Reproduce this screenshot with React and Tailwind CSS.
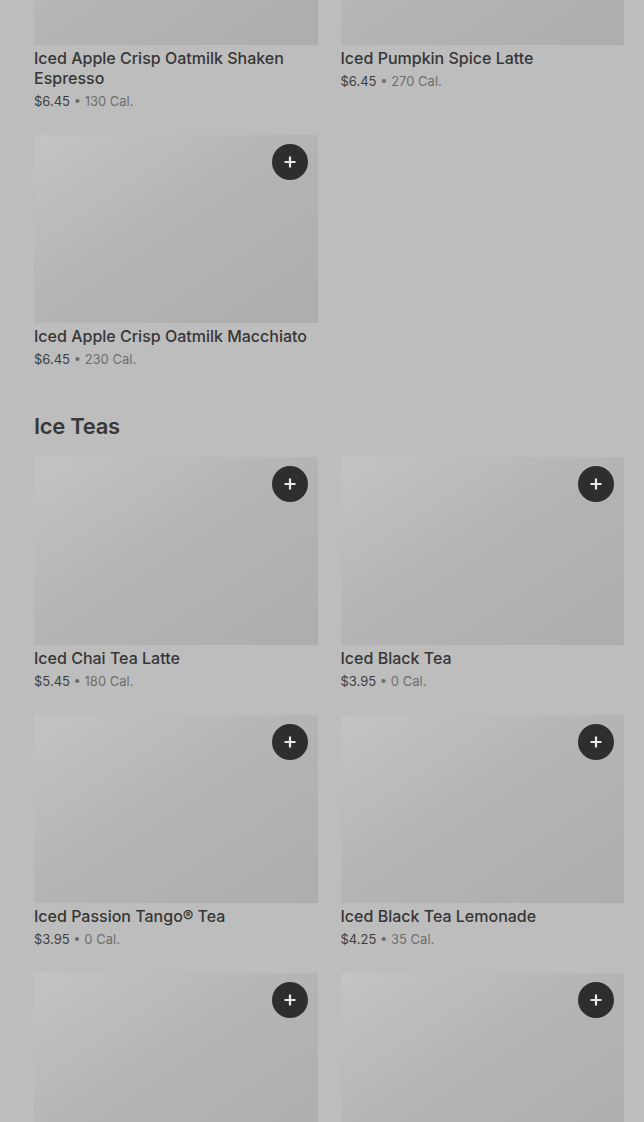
import React from 'react';

const sections = [
  {
    title: null,
    items: [
      { name: 'Iced Apple Crisp Oatmilk Shaken Espresso', price: '$6.45', cal: '130 Cal.' },
      { name: 'Iced Pumpkin Spice Latte', price: '$6.45', cal: '270 Cal.' },
      { name: 'Iced Apple Crisp Oatmilk Macchiato', price: '$6.45', cal: '230 Cal.' },
    ],
  },
  {
    title: 'Ice Teas',
    items: [
      { name: 'Iced Chai Tea Latte', price: '$5.45', cal: '180 Cal.' },
      { name: 'Iced Black Tea', price: '$3.95', cal: '0 Cal.' },
      { name: 'Iced Passion Tango® Tea', price: '$3.95', cal: '0 Cal.' },
      { name: 'Iced Black Tea Lemonade', price: '$4.25', cal: '35 Cal.' },
      { name: 'Iced Green Tea', price: '$3.95', cal: '0 Cal.' },
      { name: 'Iced Green Tea Lemonade', price: '$4.25', cal: '35 Cal.' },
    ],
  },
];

const PlusIcon = () => (
  <svg width="14" height="14" viewBox="0 0 14 14" fill="none">
    <path d="M7 1.5v11M1.5 7h11" stroke="#e8e8e8" strokeWidth="2.2" />
  </svg>
);

const Card = ({ item }) => (
  <div className="flex flex-col">
    <div className="relative h-[188px] bg-gradient-to-br from-[#c3c3c3] via-[#b4b4b4] to-[#adadad]">
      <button className="absolute top-[9px] right-[10px] w-9 h-9 rounded-full bg-[#2e2e2e] flex items-center justify-center">
        <PlusIcon />
      </button>
    </div>
    <div className="pt-[3px] pb-[24px]">
      <div className="text-[16px] leading-[20px] font-medium text-[#363636]">{item.name}</div>
      <div className="mt-[3px] text-[13px] leading-[20px] text-[#3e3e3e]">
        {item.price}
        <span className="text-[#6e6e6e]"> • {item.cal}</span>
      </div>
    </div>
  </div>
);

export default function App() {
  return (
    <div className="h-[1122px] bg-[#bdbdbd] overflow-hidden" style={{ fontFamily: 'Inter, "Noto Sans", sans-serif' }}>
      <div className="mt-[-143px] pl-[34px] pr-[20px]">
        {sections.map((s, i) => (
          <div key={i}>
            {s.title && (
              <h2 className="mt-[19px] mb-[17px] text-[22px] leading-[28px] font-semibold tracking-[-0.3px] text-[#383838]">
                {s.title}
              </h2>
            )}
            <div className="grid grid-cols-2 gap-x-[23px]">
              {s.items.map((item) => (
                <Card key={item.name} item={item} />
              ))}
            </div>
          </div>
        ))}
      </div>
    </div>
  );
}
